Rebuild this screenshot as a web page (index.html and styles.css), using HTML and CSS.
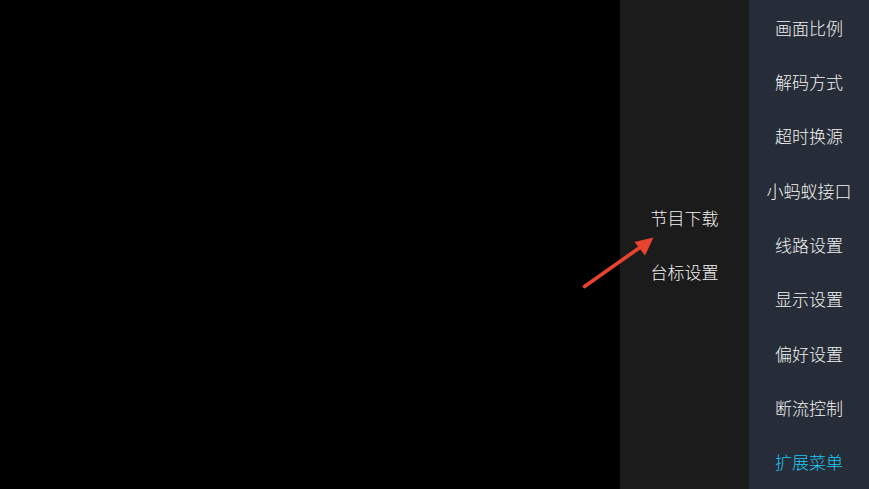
FILE: index.html
```html
<!DOCTYPE html>
<html lang="zh">
<head>
<meta charset="utf-8">
<link rel="stylesheet" href="styles.css">
</head>
<body>
<div class="screen">
  <div class="video"></div>
  <div class="submenu">
    <div class="item">节目下载</div>
    <div class="item">台标设置</div>
  </div>
  <div class="menu">
    <div class="item">画面比例</div>
    <div class="item">解码方式</div>
    <div class="item">超时换源</div>
    <div class="item">小蚂蚁接口</div>
    <div class="item">线路设置</div>
    <div class="item">显示设置</div>
    <div class="item">偏好设置</div>
    <div class="item">断流控制</div>
    <div class="item active">扩展菜单</div>
  </div>
  <svg class="arrow" width="80" height="60" viewBox="0 0 80 60">
    <line x1="4.5" y1="51.5" x2="62" y2="11" stroke="#e8432e" stroke-width="3.6" stroke-linecap="round"/>
    <polygon points="73.5,2.5 54.5,7 65,20.5" fill="#e8432e"/>
  </svg>
</div>
</body>
</html>
```
FILE: styles.css
```css
* { box-sizing: border-box; }
html, body { margin: 0; padding: 0; background: #000; }
body {
  font-family: "Noto Sans CJK SC", "Noto Sans", sans-serif;
  color: #f2f2f2;
}
.screen {
  position: relative;
  width: 869px;
  height: 489px;
  display: flex;
  overflow: hidden;
}
.video { width: 620px; background: #000; }
.submenu {
  width: 129px;
  background: #1b1b1b;
  display: flex;
  flex-direction: column;
  justify-content: center;
}
.submenu .item {
  height: 54px;
  display: flex;
  align-items: center;
  justify-content: center;
  font-size: 17px;
  font-weight: 300;
}
.menu {
  width: 120px;
  background: #272d38;
  display: flex;
  flex-direction: column;
}
.menu .item {
  flex: 1;
  display: flex;
  align-items: center;
  justify-content: center;
  font-size: 17px;
  font-weight: 300;
  white-space: nowrap;
}
.menu .item.active { color: #1ec8f2; }
.arrow {
  position: absolute;
  left: 580px;
  top: 235px;
}
```
